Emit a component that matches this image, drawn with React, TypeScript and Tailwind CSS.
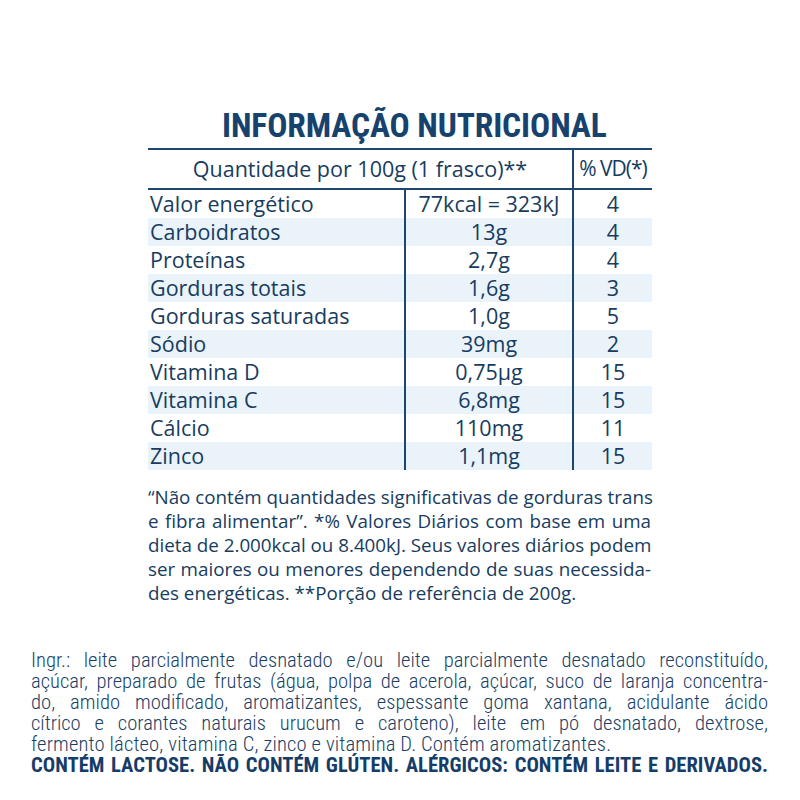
const rows: [string, string, string][] = [
  ['Valor energético', '77kcal = 323kJ', '4'],
  ['Carboidratos', '13g', '4'],
  ['Proteínas', '2,7g', '4'],
  ['Gorduras totais', '1,6g', '3'],
  ['Gorduras saturadas', '1,0g', '5'],
  ['Sódio', '39mg', '2'],
  ['Vitamina D', '0,75µg', '15'],
  ['Vitamina C', '6,8mg', '15'],
  ['Cálcio', '110mg', '11'],
  ['Zinco', '1,1mg', '15'],
];

const note = [
  '“Não contém quantidades significativas de gorduras trans',
  'e fibra alimentar”. *% Valores Diários com base em uma',
  'dieta de 2.000kcal ou 8.400kJ. Seus valores diários podem',
  'ser maiores ou menores dependendo de suas necessida-',
];

const ingr = [
  'Ingr.: leite parcialmente desnatado e/ou leite parcialmente desnatado reconstituído,',
  'açúcar, preparado de frutas (água, polpa de acerola, açúcar, suco de laranja concentra-',
  'do, amido modificado,  aromatizantes, espessante goma xantana, acidulante ácido',
  'cítrico e corantes naturais urucum e caroteno), leite em pó desnatado, dextrose,',
];

export default function App() {
  return (
    <div className="w-[800px] h-[800px] bg-white text-[#173c60] font-['Open_Sans',sans-serif]">
      <div className="pt-[105px] pl-[222px]">
        <h1 className="font-['Roboto_Condensed','Roboto',sans-serif] font-bold text-[33.5px] leading-[41px] text-[#16426d] tracking-[-0.1px] whitespace-nowrap">
          INFORMAÇÃO NUTRICIONAL
        </h1>
      </div>

      <div className="ml-[148px] w-[504px] mt-[2px]">
        <div className="flex border-t-2 border-b-2 border-[#1d466f] h-[42px]">
          <div className="w-[424px] flex items-center justify-center text-[21.5px] whitespace-nowrap">
            Quantidade por 100g (1 frasco)**
          </div>
          <div className="flex-1 border-l-2 border-[#1d466f] flex items-center justify-center text-[21px] tracking-[-1px] whitespace-nowrap">
            % VD(*)
          </div>
        </div>
        {rows.map(([name, qty, vd], i) => (
          <div key={name} className={`flex h-[28px] text-[21.5px] leading-[28px] ${i % 2 === 1 ? 'bg-[#eaf3fa]' : ''}`}>
            <div className="w-[256px] pl-[2px] whitespace-nowrap">{name}</div>
            <div className="w-[168px] border-l-2 border-[#1d466f] text-center whitespace-nowrap">{qty}</div>
            <div className="flex-1 border-l-2 border-[#1d466f] text-center">{vd}</div>
          </div>
        ))}
      </div>

      <div className="ml-[148px] w-[503px] mt-[15px] text-[18.8px] leading-[24px]">
        {note.map((l) => (
          <div key={l} className="text-justify [text-align-last:justify] whitespace-nowrap">{l}</div>
        ))}
        <div className="whitespace-nowrap">des energéticas. **Porção de referência de 200g.</div>
      </div>

      <div className="ml-[31px] w-[737px] mt-[45px] text-[20.6px] leading-[21px] font-['Roboto_Condensed','Roboto',sans-serif] font-light text-[#1a3f66]">
        {ingr.map((l) => (
          <div key={l} className="text-justify [text-align-last:justify] whitespace-nowrap">{l}</div>
        ))}
        <div className="whitespace-nowrap tracking-[0.15px]">fermento lácteo, vitamina C, zinco e vitamina D. Contém aromatizantes.</div>
        <div className="font-bold text-[20.6px] leading-[20px] text-[#163d68] text-justify [text-align-last:justify] whitespace-nowrap">
          CONTÉM LACTOSE. NÃO CONTÉM GLÚTEN. ALÉRGICOS: CONTÉM LEITE E DERIVADOS.
        </div>
      </div>
    </div>
  );
}
